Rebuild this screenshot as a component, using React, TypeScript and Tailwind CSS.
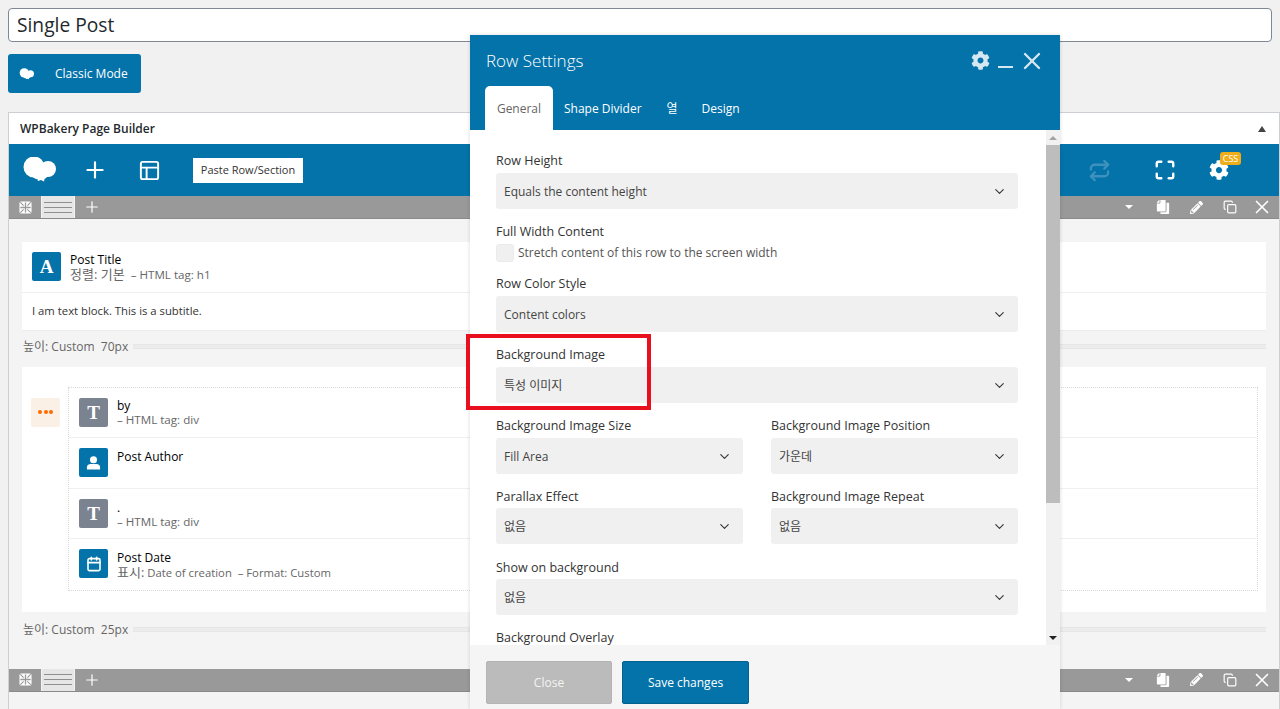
import { Calendar, ChevronDown, Copy, Maximize, PanelsTopLeft, Plus, Repeat, X } from 'lucide-react';
import { FaCog, FaCopy, FaPencilAlt } from 'react-icons/fa';

const font = { fontFamily: '"Open Sans", "Noto Sans CJK KR", sans-serif' };

function Cloud({ className }: { className: string }) {
  return (
    <svg viewBox="0 0 34 25" className={className} fill="currentColor">
      <circle cx="12" cy="10" r="10.5" />
      <circle cx="26" cy="12" r="8" />
      <ellipse cx="18" cy="18" rx="8" ry="4.5" />
      <path d="M15 20h8l-1 4.5-3-1.5-3 1z" />
    </svg>
  );
}

function MoveBox() {
  return (
    <svg viewBox="0 0 14 14" className="w-[13px] h-[13px]">
      <rect x="0.5" y="0.5" width="13" height="13" rx="2" fill="#fff" />
      <path d="M7 1.5v11M1.5 7h11" stroke="#999" strokeWidth="1.4" />
      <path d="M1.5 1.5l3.5 3.5M12.5 1.5L9 5M1.5 12.5L5 9M12.5 12.5L9 9" stroke="#999" strokeWidth="1.2" />
    </svg>
  );
}

function RowBar() {
  return (
    <div className="h-[23px] bg-[#999999] border-b border-[#8a8a8a] flex items-stretch text-white shrink-0">
      <div className="w-[33px] flex items-center justify-center border-r border-[#f4f4f4]">
        <MoveBox />
      </div>
      <div className="w-[32px] bg-[#e6e6e6] flex flex-col justify-center gap-[4px] px-[2px]">
        <div className="h-[1px] bg-[#8f8f8f]" />
        <div className="h-[1px] bg-[#8f8f8f]" />
        <div className="h-[1px] bg-[#8f8f8f]" />
      </div>
      <div className="w-[34px] flex items-center justify-center border-l border-[#f4f4f4]">
        <Plus size={18} strokeWidth={1.6} />
      </div>
      <div className="flex-1" />
      <div className="flex items-center pr-[6px]">
        <div className="w-0 h-0 border-x-[4px] border-x-transparent border-t-[4px] border-t-white mr-[23px]" />
        <FaCopy size={14} className="mr-[20px] -scale-x-100" />
        <FaPencilAlt size={13} className="mr-[20px]" />
        <Copy size={14} strokeWidth={2} className="mr-[14px]" />
        <X size={22} strokeWidth={1.8} />
      </div>
    </div>
  );
}

function Spacer({ label, lift }: { label: string; lift?: boolean }) {
  return (
    <div className={`h-[36px] flex items-center text-[12px] text-[#666666] pl-[1px] ${lift ? 'pb-[4px]' : ''}`}>
      <span className="mr-[5px] whitespace-pre">{label}</span>
      <div className="flex-1 h-[5px] bg-[#ececec] border-y border-[#e6e6e6]" />
    </div>
  );
}

function Tile({ color, children }: { color: string; children: React.ReactNode }) {
  return (
    <div className="w-[29px] h-[29px] rounded-[2px] flex items-center justify-center text-white shrink-0" style={{ backgroundColor: color }}>
      {children}
    </div>
  );
}

const serifMark = 'text-[19px] font-bold leading-none';
const serif = { fontFamily: '"Liberation Serif", serif' };

function Element({ tile, title, sub, last, drop }: { tile: React.ReactNode; title: string; sub?: React.ReactNode; last?: boolean; drop?: boolean }) {
  return (
    <div className={`h-[50.5px] flex pl-[10px] pt-[10px] ${last ? '' : 'border-b border-[#f0f0f0]'}`}>
      {tile}
      <div className={`ml-[9px] ${drop ? 'pt-[2px]' : 'pt-[1px]'}`}>
        <div className="text-black text-[12px] leading-[14px]">{title}</div>
        {sub && <div className="text-[#666666] text-[11.6px] leading-[14px] h-[14px] whitespace-pre">{sub}</div>}
      </div>
    </div>
  );
}

function Label({ text, nudge }: { text: string; nudge?: boolean }) {
  return <div className={`h-[20px] flex items-center text-[12.5px] font-medium text-[#333333] ${nudge ? 'pt-[4px]' : 'pt-[2px]'}`}>{text}</div>;
}

function Field({ label, value, nudge, className = 'mb-[12px]' }: { label: string; value: string; nudge?: boolean; className?: string }) {
  return (
    <div className={className}>
      <Label text={label} nudge={nudge} />
      <div className="mt-[3px] h-[36px] rounded-[3px] bg-[#f0f0f0] flex items-center justify-between pl-[8px] pr-[11px] text-[12px] text-[#444444]">
        <span className="pt-[2px]">{value}</span>
        <ChevronDown size={15} strokeWidth={1.8} className="text-[#333333]" />
      </div>
    </div>
  );
}

function RowSettings() {
  return (
    <div className="absolute left-[470px] top-[35px] w-[590px] h-[674px] flex flex-col bg-white shadow-[0_0_4px_rgba(0,0,0,0.15)]">
      <div className="h-[95px] bg-[#0473aa] shrink-0 flex flex-col text-white">
        <div className="h-[51px] flex items-center pl-[16px] pr-[14px]">
          <span className="text-[17px] font-light pt-[1px]">Row Settings</span>
          <div className="flex-1" />
          <FaCog size={19} className="text-[#d5e7f1] mr-[8px]" />
          <div className="w-[15px] h-[2px] bg-[#d5e7f1] mt-[12px] mr-[5px]" />
          <X size={28} strokeWidth={2} className="text-[#d5e7f1]" />
        </div>
        <div className="flex items-end h-[44px] pl-[15px] text-[12px]">
          <div className="w-[68px] h-[44px] pt-[1px] bg-white rounded-t-[5px] text-[#666666] flex items-center justify-center">General</div>
          <div className="ml-[11px] h-[44px] pt-[1px] flex items-center">Shape Divider</div>
          <div className="ml-[25px] h-[44px] pt-[1px] flex items-center">열</div>
          <div className="ml-[24px] h-[44px] pt-[1px] flex items-center">Design</div>
        </div>
      </div>
      <div className="flex-1 flex min-h-0">
        <div className="flex-1 overflow-hidden pl-[26px] pr-[28px] pt-[20px]">
          <Field label="Row Height" value="Equals the content height" />
          <div className="mb-[11px]">
            <Label text="Full Width Content" />
            <div className="mt-[3px] flex items-center h-[18px] text-[12px] text-[#555555]">
              <div className="w-[18px] h-[18px] rounded-[3px] bg-[#f0f0f0] border border-[#ebebeb] mr-[4px]" />
              Stretch content of this row to the screen width
            </div>
          </div>
          <Field label="Row Color Style" value="Content colors" />
          <Field label="Background Image" value="특성 이미지" />
          <div className="grid grid-cols-2 gap-x-[28px]">
            <Field label="Background Image Size" value="Fill Area" className="mb-[11px]" />
            <Field label="Background Image Position" value="가운데" className="mb-[11px]" />
            <Field label="Parallax Effect" value="없음" nudge />
            <Field label="Background Image Repeat" value="없음" nudge />
          </div>
          <Field label="Show on background" value="없음" nudge />
          <Label text="Background Overlay" />
        </div>
        <div className="w-[14px] bg-[#f1f1f1] flex flex-col items-center shrink-0">
          <div className="h-[15px] flex items-center">
            <div className="w-0 h-0 border-x-[4px] border-x-transparent border-b-[4px] border-b-[#a3a3a3]" />
          </div>
          <div className="w-full h-[358px] bg-[#bdbdbd]" />
          <div className="flex-1" />
          <div className="h-[15px] flex items-center">
            <div className="w-0 h-0 border-x-[4px] border-x-transparent border-t-[4px] border-t-[#222222]" />
          </div>
        </div>
      </div>
      <div className="h-[64px] bg-[#f5f5f5] shrink-0 flex items-start pl-[16px] pt-[16px] gap-[10px] text-[12px]">
        <div className="w-[126px] h-[43px] bg-[#bbbbbb] border border-[#b4b4b4] rounded-[2px] text-[#f4f4f4] flex items-center justify-center">Close</div>
        <div className="w-[127px] h-[43px] bg-[#0473aa] border border-[#03618f] rounded-[2px] text-white flex items-center justify-center">Save changes</div>
      </div>
    </div>
  );
}

export default function App() {
  return (
    <div className="relative h-[709px] overflow-hidden bg-[#f1f1f1] pl-[8px] pt-[8px]" style={font}>
      <div className="mr-[8px] h-[34px] bg-white border border-[#7e8993] rounded-[4px] flex items-center pl-[8px] pt-[1px] text-[19.2px] text-[#23282d]">Single Post</div>
      <div className="mt-[12px] w-[133px] h-[39px] bg-[#0473aa] rounded-[3px] flex items-center text-white text-[12px] pl-[11px] pt-[1px]">
        <Cloud className="w-[15px] h-[12px]" />
        <span className="ml-[21px]">Classic Mode</span>
      </div>
      <div className="mt-[19px] border border-[#ccd0d4] bg-[#f4f4f4]">
        <div className="h-[31px] bg-white flex items-center justify-between pl-[11px] pr-[12px] text-[12px] font-semibold text-[#23282d]">
          <span>WPBakery Page Builder</span>
          <div className="w-0 h-0 border-x-[4px] border-x-transparent border-b-[6px] border-b-[#444444] mr-[1px]" />
        </div>
        <div className="h-[52px] bg-[#0473aa] flex items-center text-white pl-[13px] pr-[50px]">
          <Cloud className="w-[34px] h-[25px] -mt-[2px]" />
          <Plus size={26} strokeWidth={2} className="ml-[26px]" />
          <PanelsTopLeft size={23} strokeWidth={2} className="ml-[30px]" />
          <div className="ml-[32px] w-[110px] h-[25px] bg-white text-[#333333] text-[11px] flex items-center justify-center">Paste Row/Section</div>
          <div className="flex-1" />
          <Repeat size={23} strokeWidth={2.4} className="text-[#3d91bd] mr-[32px]" />
          <Repeat size={23} strokeWidth={2.4} className="text-[#3d91bd] mr-[43px]" />
          <Maximize size={22} strokeWidth={2.6} className="mr-[33px]" />
          <div className="relative">
            <FaCog size={20} />
            <div className="absolute -top-[8px] left-[11px] w-[21px] h-[13px] rounded-[3px] bg-[#f0ad1a] text-[9px] leading-[13px] text-center">CSS</div>
          </div>
        </div>
        <RowBar />
        <div className="px-[13px] pt-[23px]">
          <div className="bg-white">
            <Element
              tile={<Tile color="#0473aa"><span className={serifMark} style={serif}>A</span></Tile>}
              title="Post Title"
              sub={<><span className="text-[13px]">정렬: 기본</span>{'  – HTML tag: h1'}</>}
            />
            <div className="h-[38px] flex items-center pl-[10px] text-[11.3px] text-[#333333] border-b border-[#ececec]">I am text block. This is a subtitle.</div>
          </div>
          <Spacer label="높이: Custom  70px" lift />
          <div className="bg-white h-[245px] relative pl-[46px] pr-[8px] pt-[20px]">
            <div className="absolute left-[9px] top-[31px] w-[29px] h-[29px] rounded-[2px] bg-[#fbf0e6] flex items-center justify-center gap-[1.5px]">
              <div className="w-[4px] h-[4px] rounded-full bg-[#ff6a00]" />
              <div className="w-[4px] h-[4px] rounded-full bg-[#ff6a00]" />
              <div className="w-[4px] h-[4px] rounded-full bg-[#ff6a00]" />
            </div>
            <div className="border border-dotted border-[#d8d8d8] h-[204px]">
              <Element tile={<Tile color="#7b8290"><span className={serifMark} style={serif}>T</span></Tile>} title="by" sub="– HTML tag: div" />
              <Element
                tile={
                  <Tile color="#0473aa">
                    <svg viewBox="0 0 16 16" className="w-[15px] h-[16px]" fill="currentColor">
                      <circle cx="8" cy="4.5" r="3.8" />
                      <path d="M1 15v-2.5C1 10 3 9 5 9h6c2 0 4 1 4 3.5V15z" />
                    </svg>
                  </Tile>
                }
                title="Post Author"
                drop
              />
              <Element tile={<Tile color="#7b8290"><span className={serifMark} style={serif}>T</span></Tile>} title="." sub="– HTML tag: div" drop />
              <Element
                tile={<Tile color="#0473aa"><Calendar size={16} strokeWidth={2.4} /></Tile>}
                title="Post Date"
                sub={<><span className="text-[13px]">표시:</span><span className="text-[11.3px]">{' Date of creation  – Format: Custom'}</span></>}
                last
                drop
              />
            </div>
          </div>
          <Spacer label="높이: Custom  25px" />
        </div>
        <div className="h-[21px]" />
        <RowBar />
        <div className="h-[40px]" />
      </div>
      <RowSettings />
      <div className="absolute left-[466px] top-[334px] w-[185px] h-[76px] border-[4px] border-[#e8101f]" />
    </div>
  );
}
